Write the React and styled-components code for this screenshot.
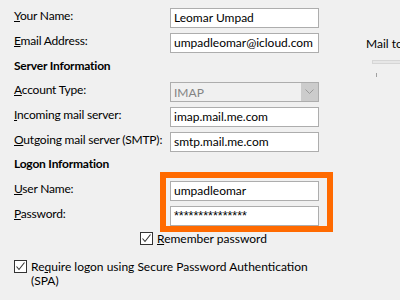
import React from 'react';
import styled, { createGlobalStyle } from 'styled-components';

const Global = createGlobalStyle`
  html, body {
    margin: 0;
    padding: 0;
    background: #f0f0f0;
    overflow: hidden;
  }
  body {
    font-family: Lato, "Noto Sans", sans-serif;
    font-size: 12px;
    color: #000;
  }
`;

const Page = styled.div`
  display: flex;
  width: 400px;
  height: 300px;
  overflow: hidden;
`;

const Form = styled.div`
  flex: none;
  width: 352px;
  padding: 8px 0 0 14px;
`;

const Row = styled.div`
  display: flex;
  align-items: flex-start;
  height: 20px;
  margin-bottom: ${p => (p.$last ? 0 : 5)}px;
`;

const Label = styled.div`
  width: 156px;
  flex: none;
  line-height: 20px;
  margin-top: -2px;
  letter-spacing: -0.2px;
  white-space: nowrap;
`;

const Heading = styled.div`
  font-weight: bold;
  line-height: 16px;
  letter-spacing: -0.2px;
  margin: ${p => p.$top}px 0 ${p => p.$bottom}px;
`;

const Field = styled.div`
  box-sizing: border-box;
  width: 149px;
  height: 20px;
  border: 1px solid #adadad;
  background: #fff;
  padding-left: 3px;
  line-height: 18px;
  white-space: nowrap;
  overflow: hidden;
`;

const Secret = styled(Field)`
  font-family: "Liberation Sans", Arial, sans-serif;
  font-size: 12.5px;
  line-height: 19px;
`;

const Select = styled.div`
  box-sizing: border-box;
  width: 149px;
  height: 20px;
  border: 1px solid #adadad;
  background: #f0f0f0;
  color: #838383;
  display: flex;
  align-items: center;
  justify-content: space-between;
  padding-left: 3px;
`;

const SelectButton = styled.div`
  width: 17px;
  height: 18px;
  background: #cccccc;
  display: flex;
  align-items: center;
  justify-content: center;
`;

const Logon = styled.div`
  display: flex;
`;

const Highlight = styled.div`
  border: 6px solid #ff6a00;
  padding: 3px 8px 0 4px;
  margin: -9px -14px -6px -10px;
`;

const CheckRow = styled.div`
  display: flex;
  align-items: flex-start;
  gap: 4px;
  padding-left: ${p => p.$indent}px;
  margin-top: ${p => p.$top}px;
  line-height: 14px;
`;

const Box = styled.div`
  box-sizing: border-box;
  flex: none;
  width: 13px;
  height: 13px;
  border: 1px solid #333;
  background: #fff;
  display: flex;
  align-items: center;
  justify-content: center;
`;

const Side = styled.div`
  flex: none;
  padding-top: 36px;
  white-space: nowrap;
  line-height: 16px;
`;

const Track = styled.div`
  box-sizing: border-box;
  margin: 8px 0 0 6px;
  width: 200px;
  height: 4px;
  border: 1px solid #d6d6d6;
  background: #e7e7e7;
`;

const Tick = styled.div`
  width: 1px;
  height: 4px;
  margin: 9px 0 0 10px;
  background: #a0a0a0;
`;

const Check = () => (
  <svg width="11" height="11" viewBox="0 0 11 11">
    <path d="M1.5 5.5 L4 8.5 L9.5 1.5" fill="none" stroke="#333" strokeWidth="1.1" />
  </svg>
);

const Chevron = () => (
  <svg width="9" height="6" viewBox="0 0 9 6">
    <path d="M0.5 0.5 L4.5 4.5 L8.5 0.5" fill="none" stroke="#9a9a9a" strokeWidth="1" />
  </svg>
);

export default function App() {
  return (
    <Page>
      <Global />
      <Form>
        <Row>
          <Label><u>Y</u>our Name:</Label>
          <Field>Leomar Umpad</Field>
        </Row>
        <Row>
          <Label><u>E</u>mail Address:</Label>
          <Field>umpadleomar@icloud.com</Field>
        </Row>
        <Heading $top={0} $bottom={8}>Server Information</Heading>
        <Row>
          <Label><u>A</u>ccount Type:</Label>
          <Select>
            IMAP
            <SelectButton><Chevron /></SelectButton>
          </Select>
        </Row>
        <Row>
          <Label><u>I</u>ncoming mail server:</Label>
          <Field>imap.mail.me.com</Field>
        </Row>
        <Row>
          <Label><u>O</u>utgoing mail server (SMTP):</Label>
          <Field>smtp.mail.me.com</Field>
        </Row>
        <Heading $top={-1} $bottom={9}>Logon Information</Heading>
        <Logon>
          <div>
            <Row><Label><u>U</u>ser Name:</Label></Row>
            <Row $last><Label><u>P</u>assword:</Label></Row>
          </div>
          <Highlight>
            <Row><Field>umpadleomar</Field></Row>
            <Row $last><Secret>***************</Secret></Row>
          </Highlight>
        </Logon>
        <CheckRow $indent={126} $top={6}>
          <Box><Check /></Box>
          <span><u>R</u>emember password</span>
        </CheckRow>
        <CheckRow $indent={0} $top={14}>
          <Box><Check /></Box>
          <span>Re<u>q</u>uire logon using Secure Password Authentication<br />(SPA)</span>
        </CheckRow>
      </Form>
      <Side>
        Mail to keep offline:
        <Track />
        <Tick />
      </Side>
    </Page>
  );
}
